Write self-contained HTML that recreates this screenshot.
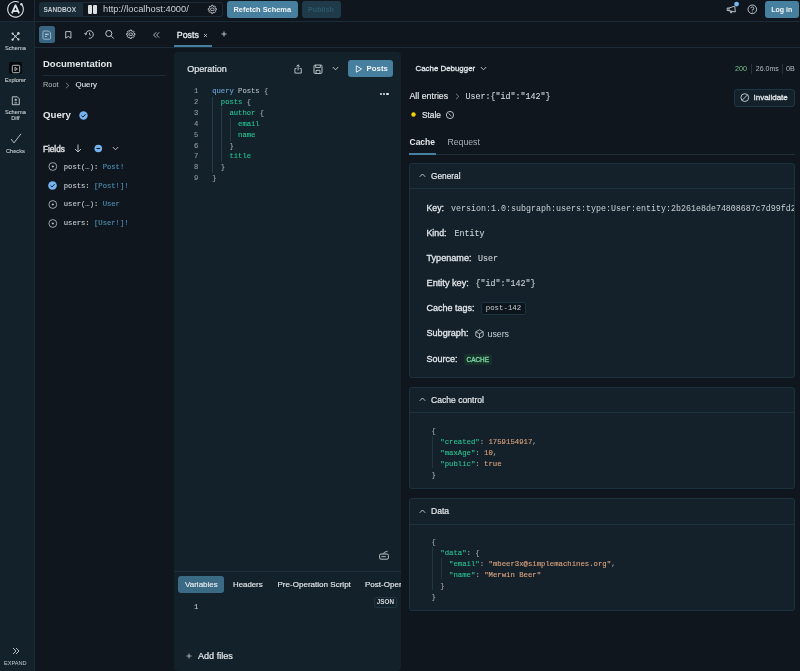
<!DOCTYPE html>
<html><head><meta charset="utf-8">
<style>
*{box-sizing:border-box;margin:0;padding:0}
html,body{width:800px;height:671px;overflow:hidden;background:#0f161e;font-family:"Liberation Sans",sans-serif;color:#e3e7ea}
.a{position:absolute;white-space:nowrap}
svg{position:absolute;overflow:visible}
.m{-webkit-text-stroke:0.25px currentColor}
.mono{-webkit-text-stroke:0.12px currentColor}
</style></head>
<body><div id="root" style="position:absolute;left:0;top:0;width:800px;height:671px;will-change:transform">
<div class="a" style="left:0px;top:21px;width:800px;height:1px;background:#1b2c38;"></div>
<div class="a" style="left:0px;top:22px;width:34px;height:649px;background:#13212a;"></div>
<div class="a" style="left:34px;top:0px;width:1px;height:671px;background:#1b2c38;"></div>
<div class="a" style="left:35px;top:47px;width:765px;height:1px;background:#1b2c38;"></div>
<div class="a" style="left:174px;top:52px;width:227px;height:618.5px;background:#13212a;border-radius:4px"></div>
<svg style="left:7px;top:1px" width="18" height="18" viewBox="0 0 18 18"><path d="M14.39 3.18 A7.8 7.8 0 1 1 11.8 1.23" fill="none" stroke="#dfe3e6" stroke-width="1.1"/><circle cx="14.39" cy="3.18" r="1.2" fill="#dfe3e6"/><path d="M4.9 12.3 L8.5 4.2 L12.1 12.3 M6.4 10 H10.6" fill="none" stroke="#e3e7ea" stroke-width="1.75" stroke-linejoin="round"/></svg>
<div class="a" style="left:39px;top:2px;width:44px;height:15px;background:#1a2c38;border-radius:3px 0 0 3px"></div>
<div class="a" style="left:43.5px;top:2px;height:15px;font-size:6.5px;font-weight:bold;line-height:15px;color:#c3cacf;-webkit-text-stroke:0">SANDBOX</div>
<div class="a" style="left:82px;top:2px;width:141px;height:15px;border:1px solid #1b2c38;border-left:none;border-radius:0 3px 3px 0"></div>
<div class="a" style="left:87.8px;top:5px;width:4.3px;height:8.8px;background:#d9dee1;border-radius:1px"></div>
<div class="a" style="left:92.8px;top:5px;width:4.1px;height:8.8px;background:#d9dee1;border-radius:1px"></div>
<div class="a" style="left:103px;top:2.80px;font-size:9.3px;line-height:13px;color:#c9d0d4;font-weight:normal;">http://localhost:4000/</div>
<svg style="left:207.7px;top:5.2px" width="8.6" height="8.6" viewBox="0 0 8.6 8.6"><path d="M3.54 1.19 L3.58 0.26 L5.02 0.26 L5.06 1.19 L5.96 1.57 L6.64 0.94 L7.66 1.96 L7.03 2.64 L7.41 3.54 L8.34 3.58 L8.34 5.02 L7.41 5.06 L7.03 5.96 L7.66 6.64 L6.64 7.66 L5.96 7.03 L5.06 7.41 L5.02 8.34 L3.58 8.34 L3.54 7.41 L2.64 7.03 L1.96 7.66 L0.94 6.64 L1.57 5.96 L1.19 5.06 L0.26 5.02 L0.26 3.58 L1.19 3.54 L1.57 2.64 L0.94 1.96 L1.96 0.94 L2.64 1.57 Z" fill="none" stroke="#c9d0d5" stroke-width="0.85" stroke-linejoin="round"/><ellipse cx="4.3" cy="4.3" rx="1.9" ry="1.3" fill="none" stroke="#c9d0d5" stroke-width="0.85"/></svg>
<div class="a" style="left:227px;top:1px;width:71px;height:17px;background:#477f9e;border-radius:3px"></div>
<div class="a" style="left:233.5px;top:4.50px;font-size:7.4px;line-height:10px;color:#f3f6f8;font-weight:bold;">Refetch Schema</div>
<div class="a" style="left:302px;top:1px;width:39px;height:17px;background:#1f3a49;border-radius:3px"></div>
<div class="a" style="left:308px;top:4.50px;font-size:7.2px;line-height:10px;color:#2f576b;font-weight:bold;">Publish</div>
<div class="a" style="left:765px;top:1px;width:34px;height:17px;background:#477f9e;border-radius:3px"></div>
<div class="a" style="left:771.2px;top:4.50px;font-size:7.0px;line-height:10px;color:#f3f6f8;font-weight:bold;">Log in</div>
<svg style="left:726px;top:5px" width="11" height="9" viewBox="0 0 11 9"><path d="M1.2 3 H3 L8.8 1.2 L9.3 7 L3 5.6 H1.2 Z M3 3 V5.6 M4 5.9 L4.8 7.9 L6 7.6 L5.6 6.3" fill="none" stroke="#c9d0d5" stroke-width="0.9" stroke-linejoin="round"/></svg>
<svg style="left:733px;top:1px" width="7" height="7" viewBox="0 0 7 7"><circle cx="3.6" cy="3.05" r="2.4" fill="#74b9f5"/></svg>
<svg style="left:747px;top:4px" width="11" height="11" viewBox="0 0 11 11"><circle cx="5.3" cy="5.3" r="4.3" fill="none" stroke="#c9d0d5" stroke-width="0.9"/><path d="M3.9 4.2 A1.45 1.45 0 1 1 5.3 5.8 V6.5" fill="none" stroke="#c9d0d5" stroke-width="0.9"/><circle cx="5.3" cy="7.9" r="0.5" fill="#c9d0d5"/></svg>
<svg style="left:11.2px;top:32.4px" width="9" height="9" viewBox="0 0 9 9"><path d="M1.6 7.6 L4.4 4.4 M7.6 1.4 L4.4 4.4 M1.6 1.6 L4.4 4.4 L7.4 7.4" stroke="#c9d0d5" stroke-width="0.9"/><circle cx="1.6" cy="1.6" r="1.1" fill="#c9d0d5"/><circle cx="7.4" cy="1.4" r="1.3" fill="#c9d0d5"/><circle cx="1.6" cy="7.6" r="1.2" fill="#c9d0d5"/><circle cx="7.4" cy="7.4" r="1.1" fill="#c9d0d5"/><circle cx="4.4" cy="4.4" r="0.9" fill="#c9d0d5"/></svg>
<div class="a" style="left:2.4px;top:44.30px;font-size:5.7px;line-height:8px;color:#c0c7cc;font-weight:normal;width:26px;text-align:center;-webkit-text-stroke:0.12px currentColor">Schema</div>
<div class="a" style="left:9.3px;top:62.3px;width:12.5px;height:12.2px;background:#05090c;border-radius:2px"></div>
<svg style="left:11px;top:64px" width="10" height="10" viewBox="0 0 10 10"><rect x="1.3" y="1.3" width="7.4" height="7.4" rx="1.2" fill="none" stroke="#c9d0d5" stroke-width="0.9"/><path d="M4 3.3 L6.4 5 L4 6.7 Z" fill="none" stroke="#c9d0d5" stroke-width="0.8"/></svg>
<div class="a" style="left:1.4px;top:76.40px;font-size:5.7px;line-height:8px;color:#c0c7cc;font-weight:normal;width:28px;text-align:center;-webkit-text-stroke:0.12px currentColor">Explorer</div>
<svg style="left:11px;top:95.5px" width="10" height="10" viewBox="0 0 10 10"><path d="M1.3 0.8 H6.3 L8.3 2.8 V8.7 H1.3 Z" fill="none" stroke="#c9d0d5" stroke-width="0.9" stroke-linejoin="round"/><path d="M4.8 2.6 V5.2 M3.5 3.9 H6.1 M3.5 6.9 H6.1" stroke="#c9d0d5" stroke-width="0.9"/></svg>
<div class="a" style="left:2.4px;top:107.70px;font-size:5.7px;line-height:8px;color:#c0c7cc;font-weight:normal;width:26px;text-align:center;-webkit-text-stroke:0.12px currentColor">Schema</div>
<div class="a" style="left:2.4px;top:113.90px;font-size:5.7px;line-height:8px;color:#c0c7cc;font-weight:normal;width:26px;text-align:center;-webkit-text-stroke:0.12px currentColor">Diff</div>
<svg style="left:10px;top:133px" width="12" height="11" viewBox="0 0 12 11"><path d="M1 6 L4 9.8 L11 0.8" fill="none" stroke="#c9d0d5" stroke-width="0.9"/></svg>
<div class="a" style="left:2.4px;top:146.80px;font-size:5.7px;line-height:8px;color:#c0c7cc;font-weight:normal;width:26px;text-align:center;-webkit-text-stroke:0.12px currentColor">Checks</div>
<svg style="left:12px;top:647px" width="8" height="8" viewBox="0 0 8 8"><path d="M1 1 L4 4 L1 7 M4 1 L7 4 L4 7" fill="none" stroke="#c9d0d5" stroke-width="0.9"/></svg>
<div class="a" style="left:0.8px;top:658.70px;font-size:5.6px;line-height:8px;color:#c0c7cc;font-weight:normal;width:29px;text-align:center">EXPAND</div>
<div class="a" style="left:38.8px;top:26px;width:16.7px;height:16.8px;background:#386682;border-radius:2.5px"></div>
<svg style="left:42px;top:29.5px" width="10" height="10" viewBox="0 0 10 10"><path d="M1.8 1 H6.6 L8.6 3 V8.2 Q8.6 9.2 7.6 9.2 H2 Q1 9.2 1 8.2 V1.8 Q1 1 1.8 1 Z" fill="none" stroke="#a9c0cc" stroke-width="0.9"/><rect x="3" y="3.6" width="3.8" height="1.5" fill="#a9c0cc"/><rect x="3" y="5.9" width="2" height="1" fill="#a9c0cc"/></svg>
<svg style="left:64.5px;top:30.8px" width="7" height="8" viewBox="0 0 7 8"><path d="M0.7 0.6 H5.9 V7.2 L3.3 5.4 L0.7 7.2 Z" fill="none" stroke="#c9d0d5" stroke-width="0.9" stroke-linejoin="round"/></svg>
<svg style="left:84px;top:29px" width="11" height="11" viewBox="0 0 11 11"><path d="M1.7 5.5 A3.8 3.8 0 1 1 4.84 9.24" fill="none" stroke="#c9d0d5" stroke-width="0.95"/><path d="M0.5 4.2 L1.7 5.7 L3.1 4.4" fill="none" stroke="#c9d0d5" stroke-width="0.9"/><path d="M5.5 3.6 V5.6 L6.8 6.3" fill="none" stroke="#c9d0d5" stroke-width="0.9"/></svg>
<svg style="left:104px;top:29px" width="11" height="11" viewBox="0 0 11 11"><circle cx="4.8" cy="4.5" r="3.05" fill="none" stroke="#c9d0d5" stroke-width="0.95"/><path d="M7 6.8 L9.8 9.6" stroke="#c9d0d5" stroke-width="0.95"/></svg>
<svg style="left:125px;top:29px" width="11" height="11" viewBox="0 0 11 11"><path d="M4.97 2.04 L5.01 1.12 L6.49 1.12 L6.53 2.04 L7.46 2.43 L8.15 1.80 L9.20 2.85 L8.57 3.54 L8.96 4.47 L9.88 4.51 L9.88 5.99 L8.96 6.03 L8.57 6.96 L9.20 7.65 L8.15 8.70 L7.46 8.07 L6.53 8.46 L6.49 9.38 L5.01 9.38 L4.97 8.46 L4.04 8.07 L3.35 8.70 L2.30 7.65 L2.93 6.96 L2.54 6.03 L1.62 5.99 L1.62 4.51 L2.54 4.47 L2.93 3.54 L2.30 2.85 L3.35 1.80 L4.04 2.43 Z" fill="none" stroke="#c9d0d5" stroke-width="0.9" stroke-linejoin="round"/><ellipse cx="5.75" cy="5.25" rx="2" ry="1.25" fill="none" stroke="#c9d0d5" stroke-width="0.9"/></svg>
<svg style="left:152.5px;top:31.5px" width="7" height="6" viewBox="0 0 7 6"><path d="M3.2 0.3 L0.6 3 L3.2 5.7 M6.2 0.3 L3.6 3 L6.2 5.7" fill="none" stroke="#c9d0d5" stroke-width="0.85"/></svg>
<div class="a" style="left:176.8px;top:29.30px;font-size:8.8px;line-height:12px;color:#e3e7ea;font-weight:normal;-webkit-text-stroke:0.35px currentColor">Posts</div>
<svg style="left:202.5px;top:33px" width="5" height="5" viewBox="0 0 5 5"><path d="M1 1 L4 4 M4 1 L1 4" stroke="#c9d0d5" stroke-width="0.8"/></svg>
<svg style="left:221.3px;top:31px" width="6" height="6" viewBox="0 0 6 6"><path d="M3 0.5 V5.5 M0.5 3 H5.5" stroke="#c9d0d5" stroke-width="0.9"/></svg>
<div class="a" style="left:174px;top:45px;width:38px;height:2px;background:#477f9e;"></div>
<div class="a" style="left:43px;top:57.00px;font-size:9.5px;line-height:13px;color:#e3e7ea;font-weight:bold;">Documentation</div>
<div class="a" style="left:43px;top:75px;width:123px;height:1px;background:#1b2c38;"></div>
<div class="a" style="left:43px;top:79.80px;font-size:7.35px;line-height:10px;color:#b4bcc2;font-weight:normal;">Root</div>
<svg style="left:64.5px;top:81.5px" width="5" height="7" viewBox="0 0 5 7"><path d="M1 0.8 L3.8 3.5 L1 6.2" fill="none" stroke="#8d979e" stroke-width="0.8"/></svg>
<div class="a" style="left:75.5px;top:79.30px;font-size:7.9px;line-height:11px;color:#e3e7ea;font-weight:normal;-webkit-text-stroke:0.1px currentColor">Query</div>
<div class="a" style="left:43px;top:108.20px;font-size:9.7px;line-height:14px;color:#e3e7ea;font-weight:bold;">Query</div>
<svg style="left:79px;top:110.5px" width="9" height="9" viewBox="0 0 9 9"><circle cx="4.5" cy="4.5" r="4.2" fill="#74b4f0"/><path d="M2.5 4.7 L3.9 6 L6.6 3.2" fill="none" stroke="#0f161e" stroke-width="1"/></svg>
<div class="a" style="left:43px;top:144.10px;font-size:8.2px;line-height:11px;color:#e3e7ea;font-weight:normal;-webkit-text-stroke:0.35px currentColor">Fields</div>
<svg style="left:74px;top:144px" width="8" height="9" viewBox="0 0 8 9"><path d="M4 0.5 V8 M1 5 L4 8 L7 5" fill="none" stroke="#c9d0d5" stroke-width="0.9"/></svg>
<svg style="left:94px;top:144px" width="9" height="9" viewBox="0 0 9 9"><circle cx="4.3" cy="4.5" r="3.8" fill="#74b4f0"/><path d="M2.5 4.5 H6.1" stroke="#0f161e" stroke-width="1.1"/></svg>
<svg style="left:112px;top:146px" width="7" height="5" viewBox="0 0 7 5"><path d="M0.8 1 L3.5 3.8 L6.2 1" fill="none" stroke="#c9d0d5" stroke-width="0.9"/></svg>
<svg style="left:47.5px;top:161.7px" width="9" height="9" viewBox="0 0 9 9"><circle cx="4.8" cy="4.5" r="3.9" fill="none" stroke="#aab2b8" stroke-width="0.9"/><path d="M4.8 3.5 V5.5 M3.8 4.5 H5.8" stroke="#c6cdd1" stroke-width="0.9"/></svg>
<div class="a mono" style="left:63.8px;top:161.60px;font-size:7.2px;line-height:10px;color:#e3e7ea;font-weight:normal;font-family:'Liberation Mono',monospace;"><span style="color:#c6cdd2">post(…): </span><span style="color:#4f90b3">Post!</span></div>
<svg style="left:47.5px;top:180.7px" width="9" height="9" viewBox="0 0 9 9"><circle cx="4.5" cy="4.5" r="4.3" fill="#74b4f0"/><path d="M2.5 4.7 L3.9 6 L6.6 3.2" fill="none" stroke="#0f161e" stroke-width="1"/></svg>
<div class="a mono" style="left:63.8px;top:180.60px;font-size:7.2px;line-height:10px;color:#e3e7ea;font-weight:normal;font-family:'Liberation Mono',monospace;"><span style="color:#c6cdd2">posts: </span><span style="color:#4f90b3">[Post!]!</span></div>
<svg style="left:47.5px;top:199.5px" width="9" height="9" viewBox="0 0 9 9"><circle cx="4.8" cy="4.5" r="3.9" fill="none" stroke="#aab2b8" stroke-width="0.9"/><path d="M4.8 3.5 V5.5 M3.8 4.5 H5.8" stroke="#c6cdd1" stroke-width="0.9"/></svg>
<div class="a mono" style="left:63.8px;top:199.40px;font-size:7.2px;line-height:10px;color:#e3e7ea;font-weight:normal;font-family:'Liberation Mono',monospace;"><span style="color:#c6cdd2">user(…): </span><span style="color:#4f90b3">User</span></div>
<svg style="left:47.5px;top:218.5px" width="9" height="9" viewBox="0 0 9 9"><circle cx="4.8" cy="4.5" r="3.9" fill="none" stroke="#aab2b8" stroke-width="0.9"/><path d="M4.8 3.5 V5.5 M3.8 4.5 H5.8" stroke="#c6cdd1" stroke-width="0.9"/></svg>
<div class="a mono" style="left:63.8px;top:218.40px;font-size:7.2px;line-height:10px;color:#e3e7ea;font-weight:normal;font-family:'Liberation Mono',monospace;"><span style="color:#c6cdd2">users: </span><span style="color:#4f90b3">[User!]!</span></div>
<div class="a" style="left:187.2px;top:62.90px;font-size:9.0px;line-height:13px;color:#e3e7ea;font-weight:normal;-webkit-text-stroke:0.2px currentColor">Operation</div>
<svg style="left:293.5px;top:63.8px" width="8.2" height="10" viewBox="0 0 9 11"><path d="M2.8 5 H1 V10 H8 V5 H6.2" fill="none" stroke="#c9d0d5" stroke-width="0.95" stroke-linejoin="round"/><path d="M4.5 7 V1 M2.6 2.8 L4.5 0.9 L6.4 2.8" fill="none" stroke="#c9d0d5" stroke-width="0.95"/></svg>
<svg style="left:313px;top:63.5px" width="10" height="10" viewBox="0 0 10 10"><rect x="1" y="1" width="8" height="8.5" rx="1.2" fill="none" stroke="#c9d0d5" stroke-width="0.9"/><path d="M2.7 1 V3.6 H7.3 V1 M3 9.5 V6.4 H7 V9.5" fill="none" stroke="#c9d0d5" stroke-width="0.9"/></svg>
<svg style="left:332px;top:65.5px" width="7" height="5" viewBox="0 0 7 5"><path d="M0.8 1 L3.5 3.8 L6.2 1" fill="none" stroke="#c9d0d5" stroke-width="0.9"/></svg>
<div class="a" style="left:348px;top:60px;width:44.5px;height:16.8px;background:#477f9e;border-radius:3px"></div>
<svg style="left:354.5px;top:64.5px" width="8" height="8" viewBox="0 0 8 8"><path d="M1.3 0.8 L6.6 4 L1.3 7.2 Z" fill="none" stroke="#f3f6f8" stroke-width="0.9" stroke-linejoin="round"/></svg>
<div class="a" style="left:366.6px;top:63.10px;font-size:7.8px;line-height:11px;color:#f3f6f8;font-weight:bold;">Posts</div>
<div class="a" style="left:380px;top:92.5px;width:9px;height:3px"><div class="a" style="left:0;top:0;width:2.2px;height:2.2px;border-radius:50%;background:#e3e7ea"></div><div class="a" style="left:3.2px;top:0;width:2.2px;height:2.2px;border-radius:50%;background:#e3e7ea"></div><div class="a" style="left:6.4px;top:0;width:2.2px;height:2.2px;border-radius:50%;background:#e3e7ea"></div></div>
<div class="a mono" style="left:194px;top:85.85px;font-size:7.2px;line-height:10px;color:#8e989f;font-weight:normal;font-family:'Liberation Mono',monospace;white-space:pre">1</div>
<div class="a mono" style="left:212.2px;top:85.85px;font-size:7.2px;line-height:10px;color:#e3e7ea;font-weight:normal;font-family:'Liberation Mono',monospace;white-space:pre"><span style="color:#6fa2d8">query</span> <span style="color:#b3bbc1">Posts</span> <span style="color:#9aa3a9">{</span></div>
<div class="a mono" style="left:194px;top:96.79px;font-size:7.2px;line-height:10px;color:#8e989f;font-weight:normal;font-family:'Liberation Mono',monospace;white-space:pre">2</div>
<div class="a mono" style="left:212.2px;top:96.79px;font-size:7.2px;line-height:10px;color:#e3e7ea;font-weight:normal;font-family:'Liberation Mono',monospace;white-space:pre">  <span style="color:#26c28f">posts</span> <span style="color:#9aa3a9">{</span></div>
<div class="a mono" style="left:194px;top:107.73px;font-size:7.2px;line-height:10px;color:#8e989f;font-weight:normal;font-family:'Liberation Mono',monospace;white-space:pre">3</div>
<div class="a mono" style="left:212.2px;top:107.73px;font-size:7.2px;line-height:10px;color:#e3e7ea;font-weight:normal;font-family:'Liberation Mono',monospace;white-space:pre">    <span style="color:#26c28f">author</span> <span style="color:#9aa3a9">{</span></div>
<div class="a mono" style="left:194px;top:118.67px;font-size:7.2px;line-height:10px;color:#8e989f;font-weight:normal;font-family:'Liberation Mono',monospace;white-space:pre">4</div>
<div class="a mono" style="left:212.2px;top:118.67px;font-size:7.2px;line-height:10px;color:#e3e7ea;font-weight:normal;font-family:'Liberation Mono',monospace;white-space:pre">      <span style="color:#26c28f">email</span></div>
<div class="a mono" style="left:194px;top:129.61px;font-size:7.2px;line-height:10px;color:#8e989f;font-weight:normal;font-family:'Liberation Mono',monospace;white-space:pre">5</div>
<div class="a mono" style="left:212.2px;top:129.61px;font-size:7.2px;line-height:10px;color:#e3e7ea;font-weight:normal;font-family:'Liberation Mono',monospace;white-space:pre">      <span style="color:#26c28f">name</span></div>
<div class="a mono" style="left:194px;top:140.55px;font-size:7.2px;line-height:10px;color:#8e989f;font-weight:normal;font-family:'Liberation Mono',monospace;white-space:pre">6</div>
<div class="a mono" style="left:212.2px;top:140.55px;font-size:7.2px;line-height:10px;color:#e3e7ea;font-weight:normal;font-family:'Liberation Mono',monospace;white-space:pre">    <span style="color:#9aa3a9">}</span></div>
<div class="a mono" style="left:194px;top:151.49px;font-size:7.2px;line-height:10px;color:#8e989f;font-weight:normal;font-family:'Liberation Mono',monospace;white-space:pre">7</div>
<div class="a mono" style="left:212.2px;top:151.49px;font-size:7.2px;line-height:10px;color:#e3e7ea;font-weight:normal;font-family:'Liberation Mono',monospace;white-space:pre">    <span style="color:#26c28f">title</span></div>
<div class="a mono" style="left:194px;top:162.43px;font-size:7.2px;line-height:10px;color:#8e989f;font-weight:normal;font-family:'Liberation Mono',monospace;white-space:pre">8</div>
<div class="a mono" style="left:212.2px;top:162.43px;font-size:7.2px;line-height:10px;color:#e3e7ea;font-weight:normal;font-family:'Liberation Mono',monospace;white-space:pre">  <span style="color:#9aa3a9">}</span></div>
<div class="a mono" style="left:194px;top:173.37px;font-size:7.2px;line-height:10px;color:#8e989f;font-weight:normal;font-family:'Liberation Mono',monospace;white-space:pre">9</div>
<div class="a mono" style="left:212.2px;top:173.37px;font-size:7.2px;line-height:10px;color:#e3e7ea;font-weight:normal;font-family:'Liberation Mono',monospace;white-space:pre"><span style="color:#9aa3a9">}</span></div>
<div class="a" style="left:212.2px;top:96.6px;width:0.8px;height:76px;background:#2a3a45;"></div>
<div class="a" style="left:221.2px;top:107px;width:0.8px;height:54.5px;background:#2a3a45;"></div>
<div class="a" style="left:230px;top:117.6px;width:0.8px;height:23px;background:#2a3a45;"></div>
<svg style="left:378px;top:550px" width="11" height="10" viewBox="0 0 11 10"><rect x="1.6" y="4" width="8.8" height="5.2" rx="1.3" fill="none" stroke="#c9d0d5" stroke-width="0.9"/><path d="M3.3 6.6 H7.7" stroke="#c9d0d5" stroke-width="0.8"/><path d="M5.8 4 V3.2 Q5.8 2.4 6.8 2.2 L9.6 1.2" fill="none" stroke="#c9d0d5" stroke-width="0.85"/></svg>
<div class="a" style="left:174px;top:570.5px;width:227px;height:1px;background:#1f2f3a;"></div>
<div class="a" style="left:178.3px;top:576px;width:46px;height:17.2px;background:#3b6a85;border-radius:3px"></div>
<div class="a" style="left:185px;top:579.10px;font-size:8.0px;line-height:11px;color:#e6ecf0;font-weight:normal;-webkit-text-stroke:0.15px currentColor">Variables</div>
<div class="a" style="left:233px;top:579.10px;font-size:7.85px;line-height:11px;color:#e3e7ea;font-weight:normal;-webkit-text-stroke:0.15px currentColor">Headers</div>
<div class="a" style="left:277.5px;top:579.10px;font-size:8.05px;line-height:11px;color:#e3e7ea;font-weight:normal;-webkit-text-stroke:0.15px currentColor">Pre-Operation Script</div>
<div class="a" style="left:360px;top:576px;width:40.8px;height:18px;overflow:hidden">
<div class="a" style="left:5px;top:3.10px;font-size:8.05px;line-height:11px;color:#e3e7ea;font-weight:normal;-webkit-text-stroke:0.15px currentColor">Post-Operation Script</div>
</div>
<div class="a" style="left:374.2px;top:597px;width:22.4px;height:10.5px;border:1px solid #1f3541;border-radius:2px;font-size:6.3px;font-weight:bold;line-height:8.7px;text-align:center;color:#d5dbdf">JSON</div>
<div class="a mono" style="left:194px;top:602.00px;font-size:7.2px;line-height:10px;color:#c0c7cc;font-weight:normal;font-family:'Liberation Mono',monospace;">1</div>
<svg style="left:186px;top:653px" width="6" height="6" viewBox="0 0 6 6"><path d="M3 0.5 V5.5 M0.5 3 H5.5" stroke="#c9d0d5" stroke-width="0.8"/></svg>
<div class="a" style="left:198px;top:649.50px;font-size:9.1px;line-height:13px;color:#e3e7ea;font-weight:normal;-webkit-text-stroke:0.2px currentColor">Add files</div>
<div class="a" style="left:415.5px;top:63.00px;font-size:7.9px;line-height:11px;color:#e3e7ea;font-weight:normal;-webkit-text-stroke:0.3px currentColor">Cache Debugger</div>
<svg style="left:480px;top:66px" width="7" height="5" viewBox="0 0 7 5"><path d="M0.8 1 L3.5 3.8 L6.2 1" fill="none" stroke="#c9d0d5" stroke-width="0.9"/></svg>
<div class="a" style="left:735px;top:63.50px;font-size:7.2px;line-height:10px;color:#78c48f;font-weight:normal;">200</div>
<div class="a" style="left:751px;top:64px;width:0.8px;height:10px;background:#24343f;"></div>
<div class="a" style="left:755.8px;top:63.50px;font-size:7.0px;line-height:10px;color:#b4bcc2;font-weight:normal;">26.0ms</div>
<div class="a" style="left:782px;top:64px;width:0.8px;height:10px;background:#24343f;"></div>
<div class="a" style="left:786px;top:63.50px;font-size:7.2px;line-height:10px;color:#b4bcc2;font-weight:normal;">0B</div>
<div class="a" style="left:409.5px;top:90.00px;font-size:8.8px;line-height:12px;color:#e3e7ea;font-weight:normal;-webkit-text-stroke:0.15px currentColor">All entries</div>
<svg style="left:454.5px;top:92.5px" width="5" height="7" viewBox="0 0 5 7"><path d="M1 0.8 L3.8 3.5 L1 6.2" fill="none" stroke="#8d979e" stroke-width="0.8"/></svg>
<div class="a mono" style="left:465.5px;top:90.50px;font-size:8.33px;line-height:12px;color:#d0d6da;font-weight:normal;font-family:'Liberation Mono',monospace;">User:{"id":"142"}</div>
<div class="a" style="left:734px;top:89px;width:61px;height:17.6px;border:1px solid #1f3744;border-radius:3px;background:#14212b"></div>
<svg style="left:740px;top:93px" width="10" height="10" viewBox="0 0 10 10"><circle cx="4.8" cy="4.6" r="3.9" fill="none" stroke="#c9d0d5" stroke-width="0.9"/><path d="M2.1 7.3 L7.5 1.9" stroke="#c9d0d5" stroke-width="0.9"/></svg>
<div class="a" style="left:753.5px;top:92.30px;font-size:8.0px;line-height:11px;color:#e3e7ea;font-weight:normal;-webkit-text-stroke:0.3px currentColor">Invalidate</div>
<svg style="left:410.6px;top:112.1px" width="5" height="5" viewBox="0 0 5 5"><circle cx="2.5" cy="2.5" r="2.2" fill="#f5cf0a"/></svg>
<div class="a" style="left:422px;top:108.50px;font-size:8.3px;line-height:12px;color:#e3e7ea;font-weight:normal;-webkit-text-stroke:0.2px currentColor">Stale</div>
<svg style="left:445px;top:109.6px" width="10" height="10" viewBox="0 0 10 10"><circle cx="5" cy="5" r="3.6" fill="none" stroke="#c9d0d5" stroke-width="0.9"/><path d="M3.6 3.4 L5.2 5.2 L6.4 6.2" fill="none" stroke="#c9d0d5" stroke-width="0.8"/></svg>
<div class="a" style="left:409.5px;top:136.00px;font-size:8.5px;line-height:12px;color:#e3e7ea;font-weight:bold;">Cache</div>
<div class="a" style="left:447.5px;top:136.00px;font-size:8.7px;line-height:12px;color:#a9b2b8;font-weight:normal;">Request</div>
<div class="a" style="left:409px;top:154px;width:386px;height:1px;background:#1f2f3a;"></div>
<div class="a" style="left:409px;top:152.5px;width:26.5px;height:2px;background:#477f9e;"></div>
<div class="a" style="left:409px;top:163px;width:386px;height:215px;border:1px solid #1c333f;border-radius:3px;background:#14212b;overflow:hidden"></div>
<div class="a" style="left:410px;top:188px;width:384px;height:1px;background:#1c333f;"></div>
<svg style="left:418.5px;top:173px" width="7" height="5" viewBox="0 0 7 5"><path d="M0.8 3.8 L3.5 1 L6.2 3.8" fill="none" stroke="#c9d0d5" stroke-width="0.9"/></svg>
<div class="a" style="left:431px;top:170.00px;font-size:8.3px;line-height:12px;color:#e3e7ea;font-weight:normal;-webkit-text-stroke:0.2px currentColor">General</div>
<div class="a" style="left:426.5px;top:202.00px;font-size:8.75px;line-height:12px;color:#e3e7ea;font-weight:normal;-webkit-text-stroke:0.3px currentColor">Key:</div>
<div class="a" style="left:426.5px;top:227.00px;font-size:8.8px;line-height:12px;color:#e3e7ea;font-weight:normal;-webkit-text-stroke:0.3px currentColor">Kind:</div>
<div class="a" style="left:426.5px;top:251.75px;font-size:9.1px;line-height:13px;color:#e3e7ea;font-weight:normal;-webkit-text-stroke:0.3px currentColor">Typename:</div>
<div class="a" style="left:426.5px;top:276.75px;font-size:9.2px;line-height:13px;color:#e3e7ea;font-weight:normal;-webkit-text-stroke:0.3px currentColor">Entity key:</div>
<div class="a" style="left:426.5px;top:302.00px;font-size:9.0px;line-height:13px;color:#e3e7ea;font-weight:normal;-webkit-text-stroke:0.3px currentColor">Cache tags:</div>
<div class="a" style="left:426.5px;top:327.25px;font-size:9.1px;line-height:13px;color:#e3e7ea;font-weight:normal;-webkit-text-stroke:0.3px currentColor">Subgraph:</div>
<div class="a" style="left:426.5px;top:352.50px;font-size:9.0px;line-height:13px;color:#e3e7ea;font-weight:normal;-webkit-text-stroke:0.3px currentColor">Source:</div>
<div class="a" style="left:451px;top:202.5px;width:343px;height:12px;overflow:hidden;font-family:'Liberation Mono',monospace;font-size:8.33px;line-height:12px;color:#c9d0d5">version:1.0:subgraph:users:type:User:entity:2b261e8de74808687c7d99fd2b1c</div>
<div class="a mono" style="left:454.5px;top:227.50px;font-size:8.33px;line-height:12px;color:#c9d0d5;font-weight:normal;font-family:'Liberation Mono',monospace;">Entity</div>
<div class="a mono" style="left:478px;top:252.75px;font-size:8.33px;line-height:12px;color:#c9d0d5;font-weight:normal;font-family:'Liberation Mono',monospace;">User</div>
<div class="a mono" style="left:475.5px;top:277.75px;font-size:8.33px;line-height:12px;color:#c9d0d5;font-weight:normal;font-family:'Liberation Mono',monospace;">{"id":"142"}</div>
<div class="a" style="left:481px;top:302px;width:45px;height:12.8px;border:1px solid #1e3340;border-radius:2px;background:#0d151c;font-family:'Liberation Mono',monospace;font-size:7.4px;line-height:10.8px;text-align:center;color:#c9d0d5">post-142</div>
<svg style="left:474.5px;top:329px" width="9" height="10" viewBox="0 0 9 10"><path d="M4.5 0.8 L8.2 2.8 V7 L4.5 9 L0.8 7 V2.8 Z M0.8 2.8 L4.5 4.8 L8.2 2.8 M4.5 4.8 V9" fill="none" stroke="#c9d0d5" stroke-width="0.8" stroke-linejoin="round"/></svg>
<div class="a" style="left:487.5px;top:327.75px;font-size:8.8px;line-height:12px;color:#c9d0d5;font-weight:normal;">users</div>
<div class="a" style="left:464px;top:354px;width:27.5px;height:11px;border-radius:2px;background:#163129;font-size:6.4px;font-weight:normal;-webkit-text-stroke:0.3px currentColor;line-height:11px;text-align:center;color:#7fd6a3">CACHE</div>
<div class="a" style="left:409px;top:386.75px;width:386px;height:102.25px;border:1px solid #1c333f;border-radius:3px;background:#14212b;overflow:hidden"></div>
<div class="a" style="left:410px;top:412px;width:384px;height:1px;background:#1c333f;"></div>
<svg style="left:418.5px;top:397px" width="7" height="5" viewBox="0 0 7 5"><path d="M0.8 3.8 L3.5 1 L6.2 3.8" fill="none" stroke="#c9d0d5" stroke-width="0.9"/></svg>
<div class="a" style="left:431px;top:393.50px;font-size:8.6px;line-height:12px;color:#e3e7ea;font-weight:normal;-webkit-text-stroke:0.2px currentColor">Cache control</div>
<div class="a mono" style="left:431.5px;top:426.30px;font-size:7.3px;line-height:10px;color:#e3e7ea;font-weight:normal;font-family:'Liberation Mono',monospace;white-space:pre"><span style="color:#9aa3a9">{</span></div>
<div class="a mono" style="left:440.3px;top:437.25px;font-size:7.3px;line-height:10px;color:#e3e7ea;font-weight:normal;font-family:'Liberation Mono',monospace;white-space:pre"><span style="color:#28c08e">"created"</span><span style="color:#9aa3a9">: </span><span style="color:#dca27c">1759154917</span><span style="color:#9aa3a9">,</span></div>
<div class="a mono" style="left:440.3px;top:448.20px;font-size:7.3px;line-height:10px;color:#e3e7ea;font-weight:normal;font-family:'Liberation Mono',monospace;white-space:pre"><span style="color:#28c08e">"maxAge"</span><span style="color:#9aa3a9">: </span><span style="color:#dca27c">10</span><span style="color:#9aa3a9">,</span></div>
<div class="a mono" style="left:440.3px;top:459.15px;font-size:7.3px;line-height:10px;color:#e3e7ea;font-weight:normal;font-family:'Liberation Mono',monospace;white-space:pre"><span style="color:#28c08e">"public"</span><span style="color:#9aa3a9">: </span><span style="color:#dca27c">true</span></div>
<div class="a mono" style="left:431.5px;top:470.10px;font-size:7.3px;line-height:10px;color:#e3e7ea;font-weight:normal;font-family:'Liberation Mono',monospace;white-space:pre"><span style="color:#9aa3a9">}</span></div>
<div class="a" style="left:432.2px;top:436px;width:0.8px;height:32px;background:#22363f;"></div>
<div class="a" style="left:409px;top:497.5px;width:386px;height:113.5px;border:1px solid #1c333f;border-radius:3px;background:#14212b;overflow:hidden"></div>
<div class="a" style="left:410px;top:523.5px;width:384px;height:1px;background:#1c333f;"></div>
<svg style="left:418.5px;top:508.5px" width="7" height="5" viewBox="0 0 7 5"><path d="M0.8 3.8 L3.5 1 L6.2 3.8" fill="none" stroke="#c9d0d5" stroke-width="0.9"/></svg>
<div class="a" style="left:431px;top:505.00px;font-size:8.6px;line-height:12px;color:#e3e7ea;font-weight:normal;-webkit-text-stroke:0.2px currentColor">Data</div>
<div class="a mono" style="left:431.5px;top:537.20px;font-size:7.3px;line-height:10px;color:#e3e7ea;font-weight:normal;font-family:'Liberation Mono',monospace;white-space:pre"><span style="color:#9aa3a9">{</span></div>
<div class="a mono" style="left:440.3px;top:548.18px;font-size:7.3px;line-height:10px;color:#e3e7ea;font-weight:normal;font-family:'Liberation Mono',monospace;white-space:pre"><span style="color:#28c08e">"data"</span><span style="color:#9aa3a9">: {</span></div>
<div class="a mono" style="left:449.1px;top:559.16px;font-size:7.3px;line-height:10px;color:#e3e7ea;font-weight:normal;font-family:'Liberation Mono',monospace;white-space:pre"><span style="color:#28c08e">"email"</span><span style="color:#9aa3a9">: </span><span style="color:#dca27c">"mbeer3x@simplemachines.org"</span><span style="color:#9aa3a9">,</span></div>
<div class="a mono" style="left:449.1px;top:570.14px;font-size:7.3px;line-height:10px;color:#e3e7ea;font-weight:normal;font-family:'Liberation Mono',monospace;white-space:pre"><span style="color:#28c08e">"name"</span><span style="color:#9aa3a9">: </span><span style="color:#dca27c">"Merwin Beer"</span></div>
<div class="a mono" style="left:440.3px;top:581.12px;font-size:7.3px;line-height:10px;color:#e3e7ea;font-weight:normal;font-family:'Liberation Mono',monospace;white-space:pre"><span style="color:#9aa3a9">}</span></div>
<div class="a mono" style="left:431.5px;top:592.10px;font-size:7.3px;line-height:10px;color:#e3e7ea;font-weight:normal;font-family:'Liberation Mono',monospace;white-space:pre"><span style="color:#9aa3a9">}</span></div>
<div class="a" style="left:432.2px;top:547px;width:0.8px;height:43px;background:#22363f;"></div>
<div class="a" style="left:441px;top:558px;width:0.8px;height:21px;background:#22363f;"></div>
</div></body></html>
